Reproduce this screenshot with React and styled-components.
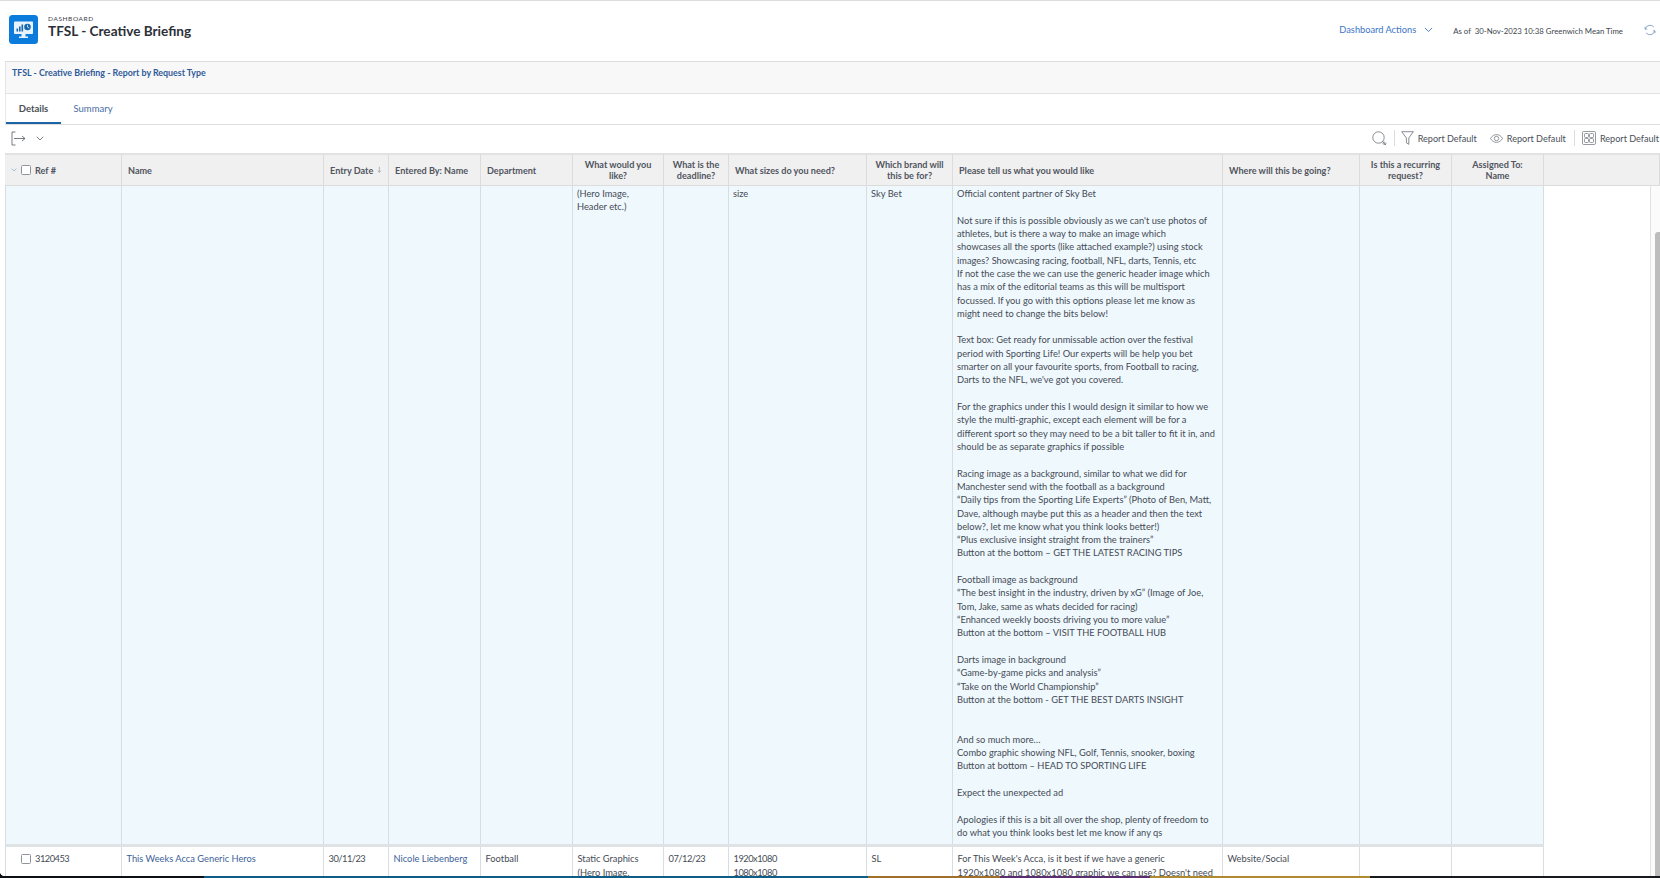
import React from 'react';
import styled, { createGlobalStyle } from 'styled-components';

const Global = createGlobalStyle`
  html, body { margin: 0; padding: 0; background: #fff; overflow: hidden; }
  body { font-family: "Lato", "Open Sans", "Liberation Sans", sans-serif; color: #454b55; }
`;

const Page = styled.div`
  position: relative;
  width: 1660px;
  height: 878px;
  display: flex;
  flex-direction: column;
  overflow: hidden;
  background: #fff;
  border-top: 1px solid #dcdcdc;
  box-sizing: border-box;
`;

const TopBar = styled.header`
  height: 60px;
  flex: none;
  display: flex;
  align-items: center;
  padding: 0 4px 0 9px;
`;
const Logo = styled.span`
  display: flex;
  margin-top: -4px;
`;
const Titles = styled.div`
  margin-left: 10px;
  display: flex;
  flex-direction: column;
  margin-top: -9px;
`;
const Eyebrow = styled.div`
  font-size: 6.5px;
  line-height: 8px;
  letter-spacing: 0.6px;
  color: #3b4049;
`;
const PageTitle = styled.h1`
  margin: 0;
  font-size: 13.6px;
  line-height: 16px;
  font-weight: 700;
  color: #2c3038;
`;
const TopActions = styled.div`
  margin-left: auto;
  display: flex;
  align-items: center;
  margin-top: -3px;
`;
const ActionsLink = styled.a`
  font-size: 9.25px;
  color: #3d75c6;
  display: flex;
  align-items: center;
  gap: 8px;
`;
const AsOf = styled.span`
  margin-left: 20px;
  font-size: 7.8px;
  color: #40454e;
  white-space: pre;
  margin-top: 2px;
`;
const RefreshWrap = styled.span`
  margin-left: 21px;
  display: flex;
`;

const ReportPanel = styled.section`
  height: 33px;
  flex: none;
  margin-left: 5px;
  box-sizing: border-box;
  background: #f8f8f8;
  border-top: 1px solid #dedede;
  border-left: 1px solid #e4e4e4;
  border-bottom: 1px solid #e2e2e2;
  padding: 5px 6px;
  font-size: 8.84px;
  line-height: 11px;
  font-weight: 700;
  color: #2f5b98;
`;

const Tabs = styled.nav`
  height: 31px;
  flex: none;
  margin-left: 5px;
  box-sizing: border-box;
  display: flex;
  border-bottom: 1px solid #dedede;
  border-left: 1px solid #e8e8e8;
`;
const Tab = styled.a`
  height: 30px;
  box-sizing: border-box;
  display: flex;
  align-items: center;
  justify-content: center;
  font-size: 9.5px;
  width: ${p => (p.$active ? '55px' : '64px')};
  color: ${p => (p.$active ? '#4a4f58' : '#4a6ea3')};
  font-weight: ${p => (p.$active ? 700 : 400)};
  border-bottom: 2px solid ${p => (p.$active ? '#1d64a6' : 'transparent')};
  margin-bottom: -1px;
`;

const Toolbar = styled.div`
  height: 28px;
  box-sizing: border-box;
  flex: none;
  margin-left: 5px;
  display: flex;
  align-items: center;
  padding: 0 0 2px 6px;
`;
const ToolLeft = styled.div`
  display: flex;
  align-items: center;
  gap: 10px;
`;
const ToolRight = styled.div`
  margin-left: auto;
  display: flex;
  align-items: center;
  margin-right: 1px;
`;
const ToolItem = styled.span`
  display: flex;
  align-items: center;
  gap: 4px;
  font-size: 9.1px;
  color: #4a4f58;
  margin-left: ${p => p.$gap || 0}px;
`;
const ToolDivider = styled.span`
  width: 1px;
  height: 16px;
  background: #dcdcdc;
  margin-left: ${p => p.$gap}px;
`;

const TableWrap = styled.div`
  position: relative;
  flex: 1;
  min-height: 0;
  overflow: hidden;
`;
const Table = styled.table`
  border-collapse: separate;
  border-spacing: 0;
  table-layout: fixed;
  width: 1655px;
  margin-left: 5px;
  font-size: 9.3px;
`;
const HeadCell = styled.th`
  height: 33px;
  box-sizing: border-box;
  padding: 0 6px;
  background: #f0f0f0;
  border-top: 2px solid #e2e2e2;
  border-right: 1px solid #dcdcdc;
  border-bottom: 1px solid #dcdcdc;
  font-size: 9.1px;
  line-height: 11px;
  font-weight: 700;
  color: #50555f;
  text-align: ${p => (p.$center ? 'center' : 'left')};
  vertical-align: middle;
`;
const HeadInner = styled.div`
  display: flex;
  align-items: center;
  gap: 4px;
  white-space: nowrap;
`;
const Checkbox = styled.span`
  width: 10px;
  height: 10px;
  box-sizing: border-box;
  flex: none;
  border: 1px solid #8f949c;
  border-radius: 1.5px;
  background: #fff;
  display: inline-block;
`;
const Cell = styled.td`
  box-sizing: border-box;
  vertical-align: top;
  padding: ${p => (p.$row2 ? '5px 4px 0 4.5px' : '1px 4px 5px')};
  background: ${p => (p.$row2 ? '#fff' : '#eff8fd')};
  border-right: 1px solid #d6dee4;
  border-left: ${p => (p.$first ? '1px solid #d6dee4' : '0')};
  border-bottom: ${p => (p.$row2 ? '0' : '3px solid #dfe3e6')};
  font-size: 9.3px;
  line-height: 13.31px;
  letter-spacing: ${p => (p.$num ? '-0.5px' : '0')};
  color: #454b55;
  white-space: pre;
  overflow: hidden;
`;
const Filler = styled.td`
  background: #fff;
`;
const RefCell = styled.div`
  display: flex;
  align-items: flex-start;
  gap: 4px;
  padding-left: 10.5px;
`;
const RowCheck = styled(Checkbox)`
  margin-top: 2px;
`;
const Link = styled.a`
  color: #3b6299;
`;

const ScrollTrack = styled.div`
  position: absolute;
  top: 33px;
  right: 0;
  bottom: 0;
  width: 9px;
  background: #fbfbfb;
  border-left: 1px solid #e2e2e2;
`;
const ScrollThumb = styled.div`
  position: absolute;
  top: 46px;
  right: 0;
  bottom: 0;
  width: 5px;
  background: #bdbdbd;
  border-radius: 3px 0 0 0;
`;

const Wallpaper = styled.div`
  height: 2px;
  flex: none;
  background: linear-gradient(90deg, #0c0f14 0 204px, #0d5d86 204px 868px, #a0702a 868px 1000px, #5a2f6d 1000px 1150px, #b08a2e 1150px 1370px, #17191e 1370px);
  &::before {
    content: '';
    position: absolute;
    left: 0;
    bottom: 0;
    width: 5px;
    height: 7px;
    background: radial-gradient(circle at 100% 0, transparent 5px, #0c0f14 5.5px);
  }
`;

const LogoIcon = () => (
  <svg width="29" height="29" viewBox="0 0 29 29" style={{ flex: 'none' }}>
    <rect width="29" height="29" rx="3.5" fill="#0b7bdc" />
    <rect x="5" y="6.5" width="19" height="12.5" rx="0.8" fill="#e8f3fc" />
    <path d="M12.5 19h4v2.5h2.5v1.5h-9v-1.5h2.5z" fill="#e8f3fc" />
    <rect x="7.5" y="13.5" width="1.6" height="3" fill="#1667ae" />
    <rect x="10" y="11.5" width="1.6" height="5" fill="#1667ae" />
    <rect x="12.5" y="9.5" width="1.6" height="7" fill="#1667ae" />
    <circle cx="18.5" cy="12" r="3.3" fill="#1667ae" />
    <path d="M18.5 9.8V12l1.8 1" stroke="#e8f3fc" strokeWidth="0.8" fill="none" />
  </svg>
);
const Chevron = ({ size = 9, color = '#3d75c6' }) => (
  <svg width={size} height={size * 0.6} viewBox="0 0 10 6" fill="none" stroke={color} strokeWidth="1">
    <path d="M1 1l4 4 4-4" />
  </svg>
);
const RefreshIcon = () => (
  <svg width="12" height="12" viewBox="0 0 12 12" fill="none" stroke="#6c8fbd" strokeWidth="0.8">
    <path d="M1.2 5A5 5 0 0 1 9.8 3" />
    <path d="M10.8 7A5 5 0 0 1 2.2 9" />
    <path d="M1 2.8V5.2h2.2M11 9.2V6.8H8.8" strokeWidth="0.7" />
  </svg>
);
const ExportIcon = () => (
  <svg width="15" height="15" viewBox="0 0 15 15" fill="none" stroke="#555a63" strokeWidth="0.8">
    <path d="M4.5 1H1v13h3.5" />
    <path d="M3 7.5h11M11 5l3 2.5-3 2.5" />
  </svg>
);
const SearchIcon = () => (
  <svg width="15" height="15" viewBox="0 0 15 15" fill="none" stroke="#6a6f77" strokeWidth="0.8">
    <circle cx="6.5" cy="6.5" r="5.7" />
    <path d="M10.5 10.5l3.5 3.5M11.8 10.4l2.2 2.2-1.4 1.4-2.2-2.2" />
  </svg>
);
const FunnelIcon = () => (
  <svg width="13" height="14" viewBox="0 0 13 14" fill="none" stroke="#6a6f77" strokeWidth="0.8">
    <path d="M.7.7h11.6L7.8 7v6.3L5.4 11.8V7z" />
  </svg>
);
const EyeIcon = () => (
  <svg width="13" height="9" viewBox="0 0 13 9" fill="none" stroke="#6a6f77" strokeWidth="0.7">
    <path d="M.5 4.5C2 2 4 .6 6.5.6S11 2 12.5 4.5C11 7 9 8.4 6.5 8.4S2 7 .5 4.5z" />
    <circle cx="6.5" cy="4.5" r="2.2" />
  </svg>
);
const GridIcon = () => (
  <svg width="14" height="14" viewBox="0 0 14 14" fill="none" stroke="#6a6f77" strokeWidth="0.7">
    <rect x="0.5" y="0.5" width="13" height="13" rx="1.2" />
    <rect x="2.5" y="2.5" width="4" height="4" rx="1" />
    <rect x="7.5" y="2.5" width="4" height="4" rx="1" />
    <rect x="2.5" y="7.5" width="4" height="4" rx="1" />
    <rect x="7.5" y="7.5" width="4" height="4" rx="1" />
  </svg>
);
const SortArrow = () => (
  <svg width="6" height="8" viewBox="0 0 6 8" fill="none" stroke="#8a8f97" strokeWidth="0.8">
    <path d="M3 0v7M.8 4.8L3 7l2.2-2.2" />
  </svg>
);

const widths = [117, 202, 65, 92, 92, 91, 65, 138, 86, 270, 137, 92, 92];

const BRIEF = `Official content partner of Sky Bet

Not sure if this is possible obviously as we can't use photos of
athletes, but is there a way to make an image which
showcases all the sports (like attached example?) using stock
images? Showcasing racing, football, NFL, darts, Tennis, etc
If not the case the we can use the generic header image which
has a mix of the editorial teams as this will be multisport
focussed. If you go with this options please let me know as
might need to change the bits below!

Text box: Get ready for unmissable action over the festival
period with Sporting Life! Our experts will be help you bet
smarter on all your favourite sports, from Football to racing,
Darts to the NFL, we've got you covered.

For the graphics under this I would design it similar to how we
style the multi-graphic, except each element will be for a
different sport so they may need to be a bit taller to fit it in, and
should be as separate graphics if possible

Racing image as a background, similar to what we did for
Manchester send with the football as a background
“Daily tips from the Sporting Life Experts” (Photo of Ben, Matt,
Dave, although maybe put this as a header and then the text
below?, let me know what you think looks better!)
“Plus exclusive insight straight from the trainers”
Button at the bottom – GET THE LATEST RACING TIPS

Football image as background
“The best insight in the industry, driven by xG” (Image of Joe,
Tom, Jake, same as whats decided for racing)
“Enhanced weekly boosts driving you to more value”
Button at the bottom – VISIT THE FOOTBALL HUB

Darts image in background
“Game-by-game picks and analysis”
“Take on the World Championship”
Button at the bottom - GET THE BEST DARTS INSIGHT


And so much more…
Combo graphic showing NFL, Golf, Tennis, snooker, boxing
Button at bottom – HEAD TO SPORTING LIFE

Expect the unexpected ad

Apologies if this is a bit all over the shop, plenty of freedom to
do what you think looks best let me know if any qs`;

export default function App() {
  return (
    <Page>
      <Global />
      <TopBar>
        <Logo><LogoIcon /></Logo>
        <Titles>
          <Eyebrow>DASHBOARD</Eyebrow>
          <PageTitle>TFSL - Creative Briefing</PageTitle>
        </Titles>
        <TopActions>
          <ActionsLink>Dashboard Actions <Chevron /></ActionsLink>
          <AsOf>As of  30-Nov-2023 10:38 Greenwich Mean Time</AsOf>
          <RefreshWrap><RefreshIcon /></RefreshWrap>
        </TopActions>
      </TopBar>

      <ReportPanel>TFSL - Creative Briefing - Report by Request Type</ReportPanel>

      <Tabs>
        <Tab $active>Details</Tab>
        <Tab>Summary</Tab>
      </Tabs>

      <Toolbar>
        <ToolLeft>
          <ExportIcon />
          <Chevron size={8} color="#555a63" />
        </ToolLeft>
        <ToolRight>
          <SearchIcon />
          <ToolDivider $gap={7} />
          <ToolItem $gap={6}><FunnelIcon />Report Default</ToolItem>
          <ToolItem $gap={13}><EyeIcon />Report Default</ToolItem>
          <ToolDivider $gap={8} />
          <ToolItem $gap={7}><GridIcon />Report Default</ToolItem>
        </ToolRight>
      </Toolbar>

      <TableWrap>
        <Table>
          <colgroup>
            {widths.map((w, i) => <col key={i} style={{ width: w }} />)}
            <col />
          </colgroup>
          <thead>
            <tr>
              <HeadCell>
                <HeadInner>
                  <Chevron size={6} color="#7d9cc4" />
                  <Checkbox />
                  Ref #
                </HeadInner>
              </HeadCell>
              <HeadCell>Name</HeadCell>
              <HeadCell>
                <HeadInner>Entry Date <SortArrow /></HeadInner>
              </HeadCell>
              <HeadCell>Entered By: Name</HeadCell>
              <HeadCell>Department</HeadCell>
              <HeadCell $center>What would you like?</HeadCell>
              <HeadCell $center>What is the deadline?</HeadCell>
              <HeadCell>What sizes do you need?</HeadCell>
              <HeadCell $center>Which brand will this be for?</HeadCell>
              <HeadCell>Please tell us what you would like</HeadCell>
              <HeadCell>Where will this be going?</HeadCell>
              <HeadCell $center>Is this a recurring request?</HeadCell>
              <HeadCell $center>Assigned To:<br />Name</HeadCell>
              <HeadCell />
            </tr>
          </thead>
          <tbody>
            <tr>
              <Cell $first />
              <Cell />
              <Cell />
              <Cell />
              <Cell />
              <Cell>{'(Hero Image,\nHeader etc.)'}</Cell>
              <Cell />
              <Cell>size</Cell>
              <Cell>Sky Bet</Cell>
              <Cell>{BRIEF}</Cell>
              <Cell />
              <Cell />
              <Cell />
              <Filler />
            </tr>
            <tr>
              <Cell $row2 $first $num><RefCell><RowCheck />3120453</RefCell></Cell>
              <Cell $row2><Link>This Weeks Acca Generic Heros</Link></Cell>
              <Cell $row2 $num>30/11/23</Cell>
              <Cell $row2><Link>Nicole Liebenberg</Link></Cell>
              <Cell $row2>Football</Cell>
              <Cell $row2>{'Static Graphics\n(Hero Image,'}</Cell>
              <Cell $row2 $num>07/12/23</Cell>
              <Cell $row2 $num>{'1920x1080\n1080x1080'}</Cell>
              <Cell $row2>SL</Cell>
              <Cell $row2>{"For This Week's Acca, is it best if we have a generic\n1920x1080 and 1080x1080 graphic we can use? Doesn't need"}</Cell>
              <Cell $row2>Website/Social</Cell>
              <Cell $row2 />
              <Cell $row2 />
              <Filler />
            </tr>
          </tbody>
        </Table>
        <ScrollTrack><ScrollThumb /></ScrollTrack>
      </TableWrap>
      <Wallpaper />
    </Page>
  );
}
